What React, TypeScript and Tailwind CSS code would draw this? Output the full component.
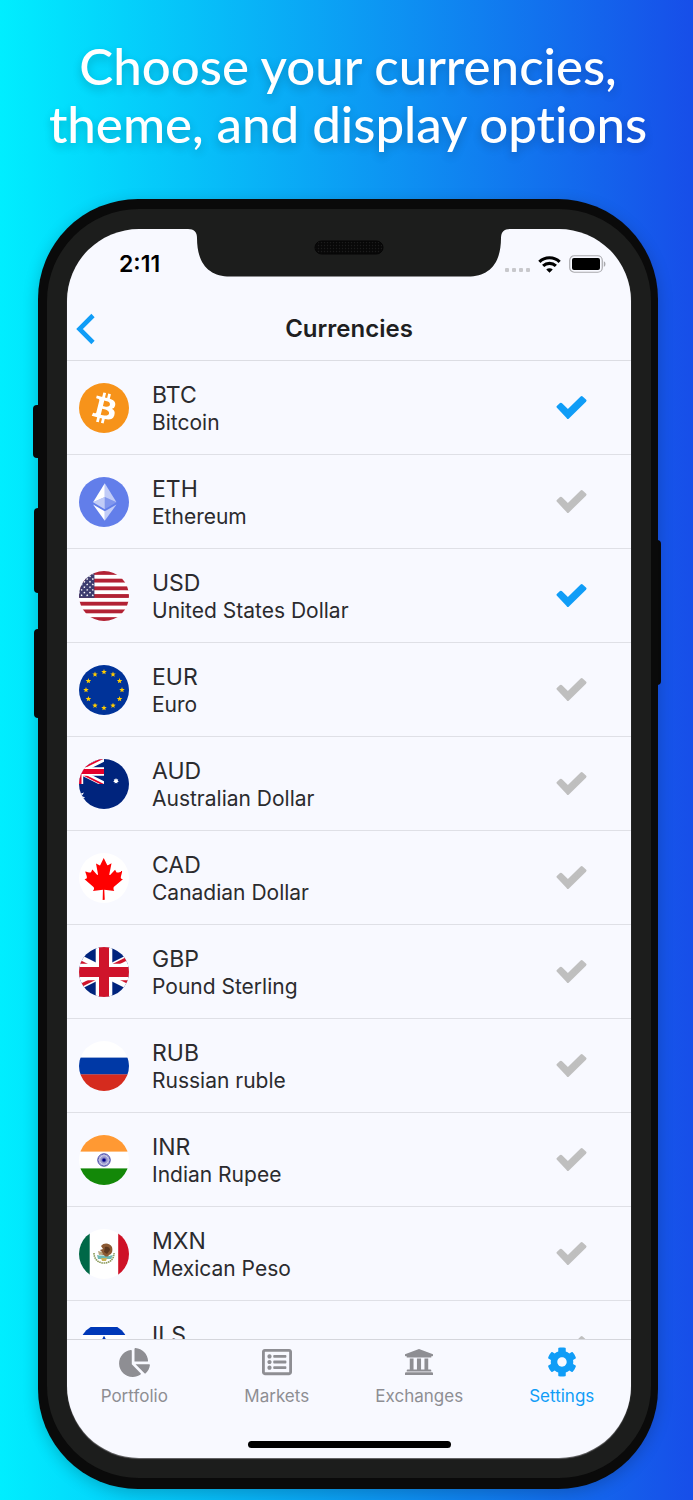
import { useState, type ReactNode } from 'react'
import clsx from 'clsx'
import { FaChartPie, FaCog, FaRegListAlt } from 'react-icons/fa'

const flagClass = 'size-[50px] shrink-0 rounded-full'

function starPoints(cx: number, cy: number, r: number, inner: number, tips: number) {
  return Array.from({ length: tips * 2 }, (_, i) => {
    const a = (Math.PI * i) / tips - Math.PI / 2
    const d = i % 2 ? r * inner : r
    return `${(cx + d * Math.cos(a)).toFixed(2)},${(cy + d * Math.sin(a)).toFixed(2)}`
  }).join(' ')
}

function Flag({ children, box = 50 }: { children: ReactNode; box?: number }) {
  return (
    <svg viewBox={`0 0 ${box} ${box}`} className={flagClass} aria-hidden="true">
      {children}
    </svg>
  )
}

const Btc = () => (
  <Flag box={32}>
    <rect width="32" height="32" fill="#f7931a" />
    <path
      fill="#fff"
      d="M23.189 14.02c.314-2.096-1.283-3.223-3.465-3.975l.708-2.84-1.728-.43-.69 2.765c-.454-.114-.92-.22-1.385-.326l.695-2.783L15.596 6l-.708 2.839c-.376-.086-.746-.17-1.104-.26l.002-.009-2.384-.595-.46 1.846s1.283.294 1.256.312c.7.175.826.638.805 1.006l-.806 3.235c.048.012.11.03.18.057l-.183-.045-1.13 4.532c-.086.212-.303.531-.793.41.018.025-1.256-.313-1.256-.313l-.858 1.978 2.25.561c.418.105.828.215 1.231.318l-.715 2.872 1.727.43.708-2.84c.472.127.93.245 1.378.357l-.706 2.828 1.728.43.715-2.866c2.948.558 5.164.333 6.097-2.333.752-2.146-.037-3.385-1.588-4.192 1.13-.26 1.98-1.003 2.207-2.538zm-3.95 5.538c-.533 2.147-4.148.986-5.32.695l.95-3.805c1.172.293 4.929.872 4.37 3.11zm.535-5.569c-.487 1.953-3.495.96-4.47.717l.86-3.45c.975.243 4.118.696 3.61 2.733z"
    />
  </Flag>
)

const Eth = () => (
  <Flag box={32}>
    <rect width="32" height="32" fill="#627eea" />
    <g fill="#fff">
      <path fillOpacity=".602" d="M16.498 4v8.87l7.497 3.35z" />
      <path d="M16.498 4L9 16.22l7.498-3.35z" />
      <path fillOpacity=".602" d="M16.498 21.968v6.027L24 17.616z" />
      <path d="M16.498 27.995v-6.028L9 17.616z" />
      <path fillOpacity=".2" d="M16.498 20.573l7.497-4.353-7.497-3.348z" />
      <path fillOpacity=".602" d="M9 16.22l7.498 4.353v-7.701z" />
    </g>
  </Flag>
)

const Usd = () => (
  <Flag>
    <rect width="50" height="50" fill="#fff" />
    {[0, 1, 2, 3, 4, 5, 6].map((i) => (
      <rect key={i} y={(i * 100) / 13} width="50" height={50 / 13} fill="#b22234" />
    ))}
    <rect width="15.4" height="26.9" fill="#3c3b6e" />
    {[0, 1, 2, 3, 4, 5, 6, 7, 8].map((row) =>
      [0, 1, 2].map((col) => (
        <polygon
          key={`${row}-${col}`}
          points={starPoints(col * 5.6 + (row % 2 ? -0.6 : 2.2) + 0.4, 2.7 + row * 2.7, 1.2, 0.5, 5)}
          fill="#fff"
        />
      )),
    )}
  </Flag>
)

const Eur = () => (
  <Flag>
    <rect width="50" height="50" fill="#003399" />
    {Array.from({ length: 12 }, (_, i) => (
      <polygon
        key={i}
        points={starPoints(
          25 + 18 * Math.sin((i * Math.PI) / 6),
          25 - 18 * Math.cos((i * Math.PI) / 6),
          2.9,
          0.42,
          5,
        )}
        fill="#ffcc00"
      />
    ))}
  </Flag>
)

const Aud = () => (
  <Flag>
    <clipPath id="au-canton">
      <rect width="25" height="25" />
    </clipPath>
    <rect width="50" height="50" fill="#00247d" />
    <g clipPath="url(#au-canton)">
      <path d="M-25 0 25 25M-25 25 25 0" stroke="#fff" strokeWidth="5" />
      <path d="M0 13.6 25 26M0 11 25 -1.4" stroke="#e4002b" strokeWidth="1.8" />
      <path d="M0 0v25M0 12.5h25" stroke="#fff" strokeWidth="8.4" />
      <path d="M0 0v25M0 12.5h25" stroke="#e4002b" strokeWidth="5" />
    </g>
    <polygon points={starPoints(37, 22, 2.9, 0.6, 7)} fill="#fff" />
    <polygon points={starPoints(0, 37.5, 6.5, 0.45, 7)} fill="#fff" />
  </Flag>
)

const Cad = () => (
  <Flag>
    <rect width="50" height="50" fill="#fff" />
    <path
      fill="#ff0000"
      transform="translate(-22.6 -9.2) scale(.15)"
      d="m201 232-13.3 4.4 61.4 54c4.7 13.7-1.6 17.8-5.6 25l66.6-8.4-1.6 67 13.9-.3-3.1-66.6 66.7 8c-4.1-8.7-7.8-13.3-4-27.2l61.3-51-10.7-4c-8.8-6.8 3.8-32.6 5.6-48.9 0 0-35.7 12.3-38 5.8l-9.2-17.5-32.6 35.8c-3.5.9-5-.5-5.9-3.5l15-74.8-23.8 13.4c-2 .9-4 .1-5.2-2.2l-23-46-23.6 47.8c-1.8 1.7-3.6 1.9-5 .7L264 130.8l13.7 74.1c-1.1 3-3.7 3.8-6.7 2.2l-31.2-35.3c-4 6.5-6.8 17.1-12.2 19.5-5.4 2.3-23.5-4.5-35.6-7 4.2 14.8 17 39.6 9 47.7z"
    />
  </Flag>
)

const Gbp = () => (
  <Flag>
    <clipPath id="gb-quarters">
      <path d="M25 25h50v25zv25h-50zh-50v-25zv-25h50z" />
    </clipPath>
    <rect width="50" height="50" fill="#00247d" />
    <path d="M-25 0 75 50M75 0-25 50" stroke="#fff" strokeWidth="10" />
    <path d="M-25 0 75 50M75 0-25 50" clipPath="url(#gb-quarters)" stroke="#cf142b" strokeWidth="6.6" />
    <path d="M25 0v50M0 25h50" stroke="#fff" strokeWidth="16.6" />
    <path d="M25 0v50M0 25h50" stroke="#cf142b" strokeWidth="10" />
  </Flag>
)

const Rub = () => (
  <Flag>
    <rect width="50" height="50" fill="#fff" />
    <rect y="16.6" width="50" height="17" fill="#0039a6" />
    <rect y="33.4" width="50" height="17" fill="#d52b1e" />
  </Flag>
)

const Inr = () => (
  <Flag>
    <rect width="50" height="50" fill="#fff" />
    <rect width="50" height="16.6" fill="#ff9933" />
    <rect y="33.4" width="50" height="17" fill="#138808" />
    <g stroke="#000088" fill="none">
      <circle cx="25" cy="25" r="6.2" strokeWidth="1" opacity=".8" />
      {Array.from({ length: 12 }, (_, i) => (
        <path key={i} d="M25 19v12" strokeWidth=".35" transform={`rotate(${i * 15} 25 25)`} />
      ))}
    </g>
    <circle cx="25" cy="25" r="1.6" fill="#000088" />
  </Flag>
)

const Mxn = () => (
  <Flag>
    <rect width="50" height="50" fill="#fff" />
    <rect width="10.7" height="50" fill="#006847" />
    <rect x="39.2" width="11" height="50" fill="#ce1126" />
    <path d="M15 24c0 6 4 10 10 10s10-4 10-10" fill="none" stroke="#8a9a5b" strokeWidth="1.6" strokeDasharray="1.6 .6" />
    <path d="M18 26c3 1 7 0 12 1l4-1-2 4H19z" fill="#6fb9b4" />
    <path d="M22 17c3-4 9-3 11 1 1 4 0 7-3 8-1 2-4 2-5 0l-5-1 3-2-2-2 3-1z" fill="#8c5a33" />
    <path d="M26 18c3-1 5 1 5 3l-3 4-3-2z" fill="#5d3920" />
    <path d="m19 22 4 1 1 2-4 1z" fill="#b9a57e" />
    <path d="M22 29h6l-1 3h-4z" fill="#c9b458" />
  </Flag>
)

const Ils = () => (
  <Flag>
    <rect width="50" height="50" fill="#fff" />
    <rect y="4" width="50" height="8" fill="#0038b8" />
    <rect y="38" width="50" height="8" fill="#0038b8" />
    <path d="M25 14.500 33 29.5H17zM25 34.5 17 20.5h16z" fill="none" stroke="#0038b8" strokeWidth="1.6" />
  </Flag>
)

const currencies = [
  { code: 'BTC', name: 'Bitcoin', Icon: Btc },
  { code: 'ETH', name: 'Ethereum', Icon: Eth },
  { code: 'USD', name: 'United States Dollar', Icon: Usd },
  { code: 'EUR', name: 'Euro', Icon: Eur },
  { code: 'AUD', name: 'Australian Dollar', Icon: Aud },
  { code: 'CAD', name: 'Canadian Dollar', Icon: Cad },
  { code: 'GBP', name: 'Pound Sterling', Icon: Gbp },
  { code: 'RUB', name: 'Russian ruble', Icon: Rub },
  { code: 'INR', name: 'Indian Rupee', Icon: Inr },
  { code: 'MXN', name: 'Mexican Peso', Icon: Mxn },
  { code: 'ILS', name: 'Israeli Shekel', Icon: Ils },
]

function Bank() {
  return (
    <svg viewBox="0 0 82 76" className="h-[26px] w-7" fill="currentColor" aria-hidden="true">
      <path d="M41 0 82 15v5q0 1-2 1h-3v4H5v-4H2q-2 0-2-1v-5zM14 28h11v32H14zM35 28h12v32H35zM57 28h11v32H57zM5 66v-3q0-3 3-3h66q3 0 3 3v3zM0 76v-5q0-3 3-3h76q3 0 3 3v5z" />
    </svg>
  )
}

const tabs = [
  { label: 'Portfolio', icon: <FaChartPie className="h-[29px] w-[31px]" /> },
  { label: 'Markets', icon: <FaRegListAlt className="size-[30px]" /> },
  { label: 'Exchanges', icon: <Bank /> },
  { label: 'Settings', icon: <FaCog className="size-[30px]" />, active: true },
]

function Notch() {
  return (
    <svg
      viewBox="0 0 322 48"
      className="absolute top-0 left-1/2 h-12 w-[322px] -translate-x-1/2"
      aria-hidden="true"
    >
      <defs>
        <pattern id="mesh" width="3" height="3" patternUnits="userSpaceOnUse">
          <rect width="3" height="3" fill="#080808" />
          <circle cx="1.5" cy="1.5" r=".7" fill="#1c1c1c" />
        </pattern>
      </defs>
      <path
        d="M0 0C6 0 9 3 9 9C9 36 22 47.5 42 47.5H280C300 47.5 313 36 313 9C313 3 316 0 322 0Z"
        fill="#1c1d1c"
      />
      <rect x="127" y="12" width="68" height="13" rx="6.5" fill="url(#mesh)" stroke="#050505" />
    </svg>
  )
}

function StatusBar() {
  return (
    <div className="flex h-[70px] shrink-0 items-center justify-between pr-[25px] pl-[52px]">
      <span className="text-[23px] font-semibold text-black">2:11</span>
      <div className="flex items-center gap-2">
        <div className="flex gap-[3px] pt-3">
          {[0, 1, 2, 3].map((i) => (
            <span key={i} className="size-1 rounded-[1px] bg-[#c8c8cc]" />
          ))}
        </div>
        <svg viewBox="0 0 69 52" className="h-[17px] w-[23px]" aria-hidden="true">
          <g fill="none" stroke="#000" strokeWidth="9.5">
            <path d="M3.500 18C20 1 49 1 65.500 18" />
            <path d="M15 30.500C26 20 43 20 54 30.500" />
          </g>
          <path d="M24.500 41C30 36 39 36 44.500 41L34.500 51.500Z" />
        </svg>
        <svg viewBox="0 0 37 18" className="h-[18px] w-[37px]" aria-hidden="true">
          <rect x=".75" y=".75" width="32.500" height="16.500" rx="4.500" fill="none" stroke="#a9a9ad" strokeWidth="1.200" />
          <rect x="3" y="3" width="28" height="12" rx="2" />
          <path d="M34.800 6.200C37 7 37 11 34.800 11.800Z" fill="#a9a9ad" />
        </svg>
      </div>
    </div>
  )
}

export default function App() {
  const [selected, setSelected] = useState(['BTC', 'USD'])

  const toggle = (code: string) =>
    setSelected((prev) => (prev.includes(code) ? prev.filter((c) => c !== code) : [...prev, code]))

  return (
    <main className="flex h-dvh flex-col bg-linear-to-r/srgb from-[#00eeff] to-[#174ee9] pr-[35px] pb-[11px] pl-[38px] font-['Inter','Liberation_Sans',sans-serif]">
      <h1 className="-mx-6 pt-[37px] pb-[46px] text-center font-['Lato',sans-serif] text-[51px] leading-[58px] font-medium text-white [font-variant-ligatures:none] text-shadow-[0_4px_10px_rgb(0_0_0/0.2)]">
        Choose your currencies,
        <br />
        theme, and display options
      </h1>

      <div className="relative flex min-h-0 flex-1">
        <div className="absolute top-[206px] -left-[5px] h-[53px] w-3 rounded-sm bg-[#0a0a0a]" />
        <div className="absolute top-[309px] -left-1 h-[85px] w-3 rounded-sm bg-[#0a0a0a]" />
        <div className="absolute top-[430px] -left-1 h-[89px] w-3 rounded-sm bg-[#0a0a0a]" />
        <div className="absolute top-[341px] -right-[3px] h-[145px] w-3 rounded-sm bg-[#0a0a0a]" />

        {/* Frame */}
        <div className="relative flex min-w-0 flex-1 rounded-[100px] bg-[#0a0a0a] pt-2.5 pr-[7px] pb-[11px] pl-[9px] shadow-[0_4px_16px_rgb(0_0_0/0.2)]">
          <div className="flex min-w-0 flex-1 rounded-[92px] bg-[#1c1d1c] p-5">
            {/* Screen */}
            <div className="relative flex min-w-0 flex-1 flex-col overflow-hidden rounded-[72px] bg-[#f8f9ff] shadow-[0_1px_1px_#6b6b6d]">
              <Notch />
              <StatusBar />

              <header className="grid h-[62px] shrink-0 grid-cols-[1fr_auto_1fr] items-center border-b border-[#dcdde3] px-2 pb-0.5">
                <button type="button" aria-label="Back" className="w-6 text-[#109df7]">
                  <svg viewBox="0 0 20 32" className="h-8 w-5" fill="none" aria-hidden="true">
                    <path d="M18 2.500 4.500 16 18 29.500" stroke="currentColor" strokeWidth="4.600" />
                  </svg>
                </button>
                <h2 className="text-2xl font-semibold text-[#1f1f22]">Currencies</h2>
              </header>

              <ul className="min-h-0 flex-1 overflow-y-auto [scrollbar-width:none]">
                {currencies.map(({ code, name, Icon }) => (
                  <li key={code} className="h-[94px] border-b border-[#dfe0e6]">
                    <label className="relative flex h-full cursor-pointer items-center gap-[23px] pr-11 pl-3">
                      <Icon />
                      <span className="flex flex-1 flex-col pt-0.5 leading-[27px] text-[#2b2b2e]">
                        <span className="text-[23px]">{code}</span>
                        <span className="text-[21px]">{name}</span>
                      </span>
                      <input
                        type="checkbox"
                        className="sr-only"
                        checked={selected.includes(code)}
                        onChange={() => toggle(code)}
                      />
                      <svg
                        viewBox="0 0 92 70"
                        className={clsx(
                          'h-[23px] w-[31px]',
                          selected.includes(code) ? 'text-[#109df7]' : 'text-[#bfbfbf]',
                        )}
                        aria-hidden="true"
                      >
                        <path
                          d="M5 33 14 25 35 46 77 5 87 14 35 65Z"
                          fill="currentColor"
                          stroke="currentColor"
                          strokeWidth="9"
                          strokeLinejoin="round"
                        />
                      </svg>
                    </label>
                  </li>
                ))}
              </ul>

              <nav className="shrink-0 border-t border-[#d5d6dc]">
                <div className="-mr-0.5 -ml-1 grid grid-cols-4">
                  {tabs.map((tab) => (
                    <button
                      key={tab.label}
                      type="button"
                      className={clsx(
                        'flex flex-col items-center pt-1.5',
                        tab.active ? 'text-[#109df7]' : 'text-[#8e8e93]',
                      )}
                    >
                      <span className="flex h-8 items-center">{tab.icon}</span>
                      <span className="mt-1.5 text-[17px] leading-6">{tab.label}</span>
                    </button>
                  ))}
                </div>
                <div className="mx-auto mt-[33px] mb-2.5 h-[7px] w-[203px] rounded-full bg-black" />
              </nav>
            </div>
          </div>
        </div>
      </div>
    </main>
  )
}
